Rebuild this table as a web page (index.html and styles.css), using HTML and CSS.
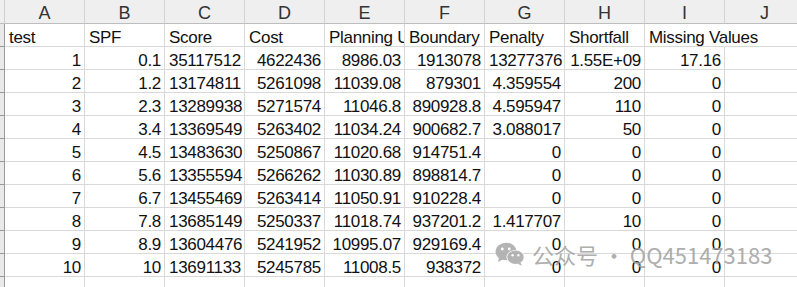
FILE: index.html
```html
<!DOCTYPE html>
<html>
<head>
<meta charset="utf-8">
<link rel="stylesheet" href="styles.css">
</head>
<body>
<div class="sheet">
  <div class="row head">
    <div class="strip"></div>
    <div class="col">A</div><div class="col">B</div><div class="col">C</div><div class="col">D</div><div class="col">E</div>
    <div class="col">F</div><div class="col">G</div><div class="col">H</div><div class="col">I</div><div class="col">J</div>
  </div>
  <div class="row">
    <div class="strip"></div>
    <div class="cell">test</div><div class="cell">SPF</div><div class="cell">Score</div><div class="cell">Cost</div><div class="cell">Planning Unit Count</div>
    <div class="cell">Boundary</div><div class="cell">Penalty</div><div class="cell">Shortfall</div><div class="cell spill">Missing Values</div><div class="cell"></div>
  </div>
  <div class="row">
    <div class="strip"></div>
    <div class="cell n">1</div><div class="cell n">0.1</div><div class="cell n">35117512</div><div class="cell n">4622436</div><div class="cell n">8986.03</div>
    <div class="cell n">1913078</div><div class="cell n">13277376</div><div class="cell n">1.55E+09</div><div class="cell n">17.16</div><div class="cell"></div>
  </div>
  <div class="row">
    <div class="strip"></div>
    <div class="cell n">2</div><div class="cell n">1.2</div><div class="cell n">13174811</div><div class="cell n">5261098</div><div class="cell n">11039.08</div>
    <div class="cell n">879301</div><div class="cell n">4.359554</div><div class="cell n">200</div><div class="cell n">0</div><div class="cell"></div>
  </div>
  <div class="row">
    <div class="strip"></div>
    <div class="cell n">3</div><div class="cell n">2.3</div><div class="cell n">13289938</div><div class="cell n">5271574</div><div class="cell n">11046.8</div>
    <div class="cell n">890928.8</div><div class="cell n">4.595947</div><div class="cell n">110</div><div class="cell n">0</div><div class="cell"></div>
  </div>
  <div class="row">
    <div class="strip"></div>
    <div class="cell n">4</div><div class="cell n">3.4</div><div class="cell n">13369549</div><div class="cell n">5263402</div><div class="cell n">11034.24</div>
    <div class="cell n">900682.7</div><div class="cell n">3.088017</div><div class="cell n">50</div><div class="cell n">0</div><div class="cell"></div>
  </div>
  <div class="row">
    <div class="strip"></div>
    <div class="cell n">5</div><div class="cell n">4.5</div><div class="cell n">13483630</div><div class="cell n">5250867</div><div class="cell n">11020.68</div>
    <div class="cell n">914751.4</div><div class="cell n">0</div><div class="cell n">0</div><div class="cell n">0</div><div class="cell"></div>
  </div>
  <div class="row">
    <div class="strip"></div>
    <div class="cell n">6</div><div class="cell n">5.6</div><div class="cell n">13355594</div><div class="cell n">5266262</div><div class="cell n">11030.89</div>
    <div class="cell n">898814.7</div><div class="cell n">0</div><div class="cell n">0</div><div class="cell n">0</div><div class="cell"></div>
  </div>
  <div class="row">
    <div class="strip"></div>
    <div class="cell n">7</div><div class="cell n">6.7</div><div class="cell n">13455469</div><div class="cell n">5263414</div><div class="cell n">11050.91</div>
    <div class="cell n">910228.4</div><div class="cell n">0</div><div class="cell n">0</div><div class="cell n">0</div><div class="cell"></div>
  </div>
  <div class="row">
    <div class="strip"></div>
    <div class="cell n">8</div><div class="cell n">7.8</div><div class="cell n">13685149</div><div class="cell n">5250337</div><div class="cell n">11018.74</div>
    <div class="cell n">937201.2</div><div class="cell n">1.417707</div><div class="cell n">10</div><div class="cell n">0</div><div class="cell"></div>
  </div>
  <div class="row">
    <div class="strip"></div>
    <div class="cell n">9</div><div class="cell n">8.9</div><div class="cell n">13604476</div><div class="cell n">5241952</div><div class="cell n">10995.07</div>
    <div class="cell n">929169.4</div><div class="cell n">0</div><div class="cell n">0</div><div class="cell n">0</div><div class="cell"></div>
  </div>
  <div class="row">
    <div class="strip"></div>
    <div class="cell n">10</div><div class="cell n">10</div><div class="cell n">13691133</div><div class="cell n">5245785</div><div class="cell n">11008.5</div>
    <div class="cell n">938372</div><div class="cell n">0</div><div class="cell n">0</div><div class="cell n">0</div><div class="cell"></div>
  </div>
  <div class="row">
    <div class="strip"></div>
    <div class="cell"></div><div class="cell"></div><div class="cell"></div><div class="cell"></div><div class="cell"></div>
    <div class="cell"></div><div class="cell"></div><div class="cell"></div><div class="cell"></div><div class="cell"></div>
  </div>

  <div class="watermark">
    <svg class="wx" viewBox="0 0 30 24" width="30" height="24">
      <ellipse cx="11" cy="9.5" rx="10.5" ry="8.8" fill="#a8a8a8"/>
      <path d="M4 15.5 L3 20 L8.5 17 Z" fill="#a8a8a8"/>
      <circle cx="7.3" cy="7" r="1.4" fill="#fff"/>
      <circle cx="14.2" cy="7" r="1.4" fill="#fff"/>
      <ellipse cx="20.5" cy="15.3" rx="9" ry="7.4" fill="#fff"/>
      <ellipse cx="20.5" cy="15.3" rx="8.2" ry="6.7" fill="#a8a8a8"/>
      <path d="M25.5 20.5 L27 23.8 L22.5 21.8 Z" fill="#a8a8a8"/>
      <circle cx="17.6" cy="13.3" r="1.2" fill="#fff"/>
      <circle cx="23.4" cy="13.3" r="1.2" fill="#fff"/>
    </svg>
    <span class="wm-text">公众号 · QQ451473183</span>
  </div>
</div>
</body>
</html>
```
FILE: styles.css
```css
html, body {
  margin: 0;
  padding: 0;
  background: #ffffff;
  overflow: hidden;
}
.sheet {
  position: relative;
  width: 797px;
  height: 287px;
  overflow: hidden;
  font-family: "Liberation Sans", Arial, sans-serif;
  font-size: 17px;
  letter-spacing: -0.3px;
  color: #111;
}
.row {
  display: flex;
  height: 23px;
}
.strip {
  flex: 0 0 5px;
  width: 5px;
  background: #e9e9e9;
  border-right: 1px solid #9a9a9a;
  border-bottom: 1px solid #9a9a9a;
  box-sizing: border-box;
}
.head {
  height: 24px;
  background: #efefef;
}
.head .strip {
  background: #efefef;
  border-bottom: 1px solid #bdbdbd;
  border-right: 1px solid #cfcfcf;
}
.col {
  flex: 0 0 80px;
  width: 80px;
  box-sizing: border-box;
  border-right: 1px solid #d4d4d4;
  border-bottom: 1px solid #bdbdbd;
  text-align: center;
  color: #333;
  line-height: 18px;
  padding-top: 4px;
  font-size: 18px;
  letter-spacing: 0;
}
.cell {
  flex: 0 0 80px;
  width: 80px;
  box-sizing: border-box;
  border-right: 1px solid #d9d9d9;
  border-bottom: 1px solid #d9d9d9;
  padding: 5px 3px 0 4px;
  line-height: 17px;
  white-space: nowrap;
  overflow: hidden;
}
.cell.n {
  text-align: right;
}
.cell.spill {
  overflow: visible;
  border-right-color: #ffffff;
}
.watermark {
  position: absolute;
  left: 495px;
  top: 241px;
  display: flex;
  align-items: center;
  gap: 7px;
  opacity: 0.85;
}
.wx {
  display: block;
}
.wm-text {
  font-family: "Noto Sans CJK SC", "Noto Sans", sans-serif;
  font-size: 22px;
  letter-spacing: 0;
  color: #a0a0a0;
  line-height: 26px;
}
```
